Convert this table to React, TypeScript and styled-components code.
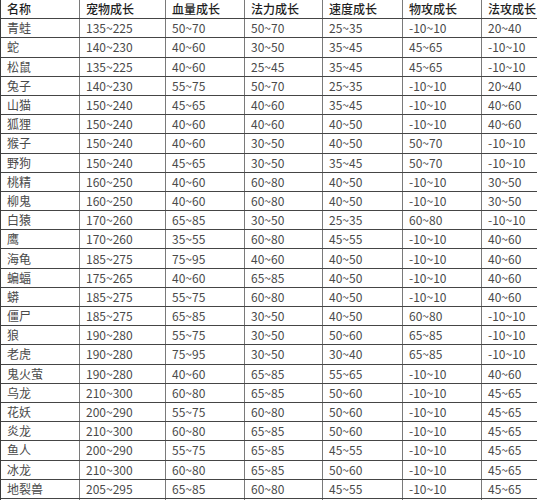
import React from 'react';
import styled, { createGlobalStyle } from 'styled-components';

const GlobalStyle = createGlobalStyle`
  html, body {
    margin: 0;
    padding: 0;
    background: #ffffff;
  }
  body {
    font-family: "Noto Sans CJK SC", "Noto Sans", sans-serif;
  }
`;

const Viewport = styled.div`
  width: 537px;
  height: 500px;
  overflow: hidden;
  background: #fff;
`;

const Table = styled.div`
  width: 562px;
  border-left: 1px solid #3a3a3a;
`;

const Row = styled.div<{ $header?: boolean }>`
  display: grid;
  grid-template-columns: 79px 86px 79px 78px 80px 79px 80px;
  height: 19.2px;
  box-sizing: border-box;
  border-bottom: 1.5px solid #454545;
  color: ${p => (p.$header ? '#1e1e1e' : '#4a4a4a')};
  font-weight: ${p => (p.$header ? 500 : 400)};
`;

const Cell = styled.div`
  display: flex;
  align-items: center;
  padding-left: 6px;
  font-size: 12px;
  line-height: 1;
  white-space: nowrap;
  border-right: 1px solid #7a7a7a;
  overflow: hidden;
`;

const headers = ['名称', '宠物成长', '血量成长', '法力成长', '速度成长', '物攻成长', '法攻成长'];

const rows: string[][] = [
  ['青蛙', '135~225', '50~70', '50~70', '25~35', '-10~10', '20~40'],
  ['蛇', '140~230', '40~60', '30~50', '35~45', '45~65', '-10~10'],
  ['松鼠', '135~225', '40~60', '25~45', '35~45', '45~65', '-10~10'],
  ['兔子', '140~230', '55~75', '50~70', '25~35', '-10~10', '20~40'],
  ['山猫', '150~240', '45~65', '40~60', '35~45', '-10~10', '40~60'],
  ['狐狸', '150~240', '40~60', '40~60', '40~50', '-10~10', '40~60'],
  ['猴子', '150~240', '40~60', '30~50', '40~50', '50~70', '-10~10'],
  ['野狗', '150~240', '45~65', '30~50', '35~45', '50~70', '-10~10'],
  ['桃精', '160~250', '40~60', '60~80', '40~50', '-10~10', '30~50'],
  ['柳鬼', '160~250', '40~60', '60~80', '40~50', '-10~10', '30~50'],
  ['白猿', '170~260', '65~85', '30~50', '25~35', '60~80', '-10~10'],
  ['鹰', '170~260', '35~55', '60~80', '45~55', '-10~10', '40~60'],
  ['海龟', '185~275', '75~95', '40~60', '40~50', '-10~10', '40~60'],
  ['蝙蝠', '175~265', '40~60', '65~85', '40~50', '-10~10', '40~60'],
  ['蟒', '185~275', '55~75', '60~80', '40~50', '-10~10', '40~60'],
  ['僵尸', '185~275', '65~85', '30~50', '40~50', '60~80', '-10~10'],
  ['狼', '190~280', '55~75', '30~50', '50~60', '65~85', '-10~10'],
  ['老虎', '190~280', '75~95', '30~50', '30~40', '65~85', '-10~10'],
  ['鬼火萤', '190~280', '40~60', '65~85', '55~65', '-10~10', '40~60'],
  ['乌龙', '210~300', '60~80', '65~85', '50~60', '-10~10', '45~65'],
  ['花妖', '200~290', '55~75', '60~80', '50~60', '-10~10', '45~65'],
  ['炎龙', '210~300', '60~80', '65~85', '50~60', '-10~10', '45~65'],
  ['鱼人', '200~290', '55~75', '65~85', '45~55', '-10~10', '45~65'],
  ['冰龙', '210~300', '60~80', '65~85', '50~60', '-10~10', '45~65'],
  ['地裂兽', '205~295', '65~85', '60~80', '45~55', '-10~10', '45~65'],
  ['', '', '', '', '', '', ''],
];

export default function App() {
  return (
    <Viewport>
      <GlobalStyle />
      <Table>
        <Row $header>
          {headers.map(h => (
            <Cell key={h}>{h}</Cell>
          ))}
        </Row>
        {rows.map((r, i) => (
          <Row key={i}>
            {r.map((v, j) => (
              <Cell key={j}>{v}</Cell>
            ))}
          </Row>
        ))}
      </Table>
    </Viewport>
  );
}
